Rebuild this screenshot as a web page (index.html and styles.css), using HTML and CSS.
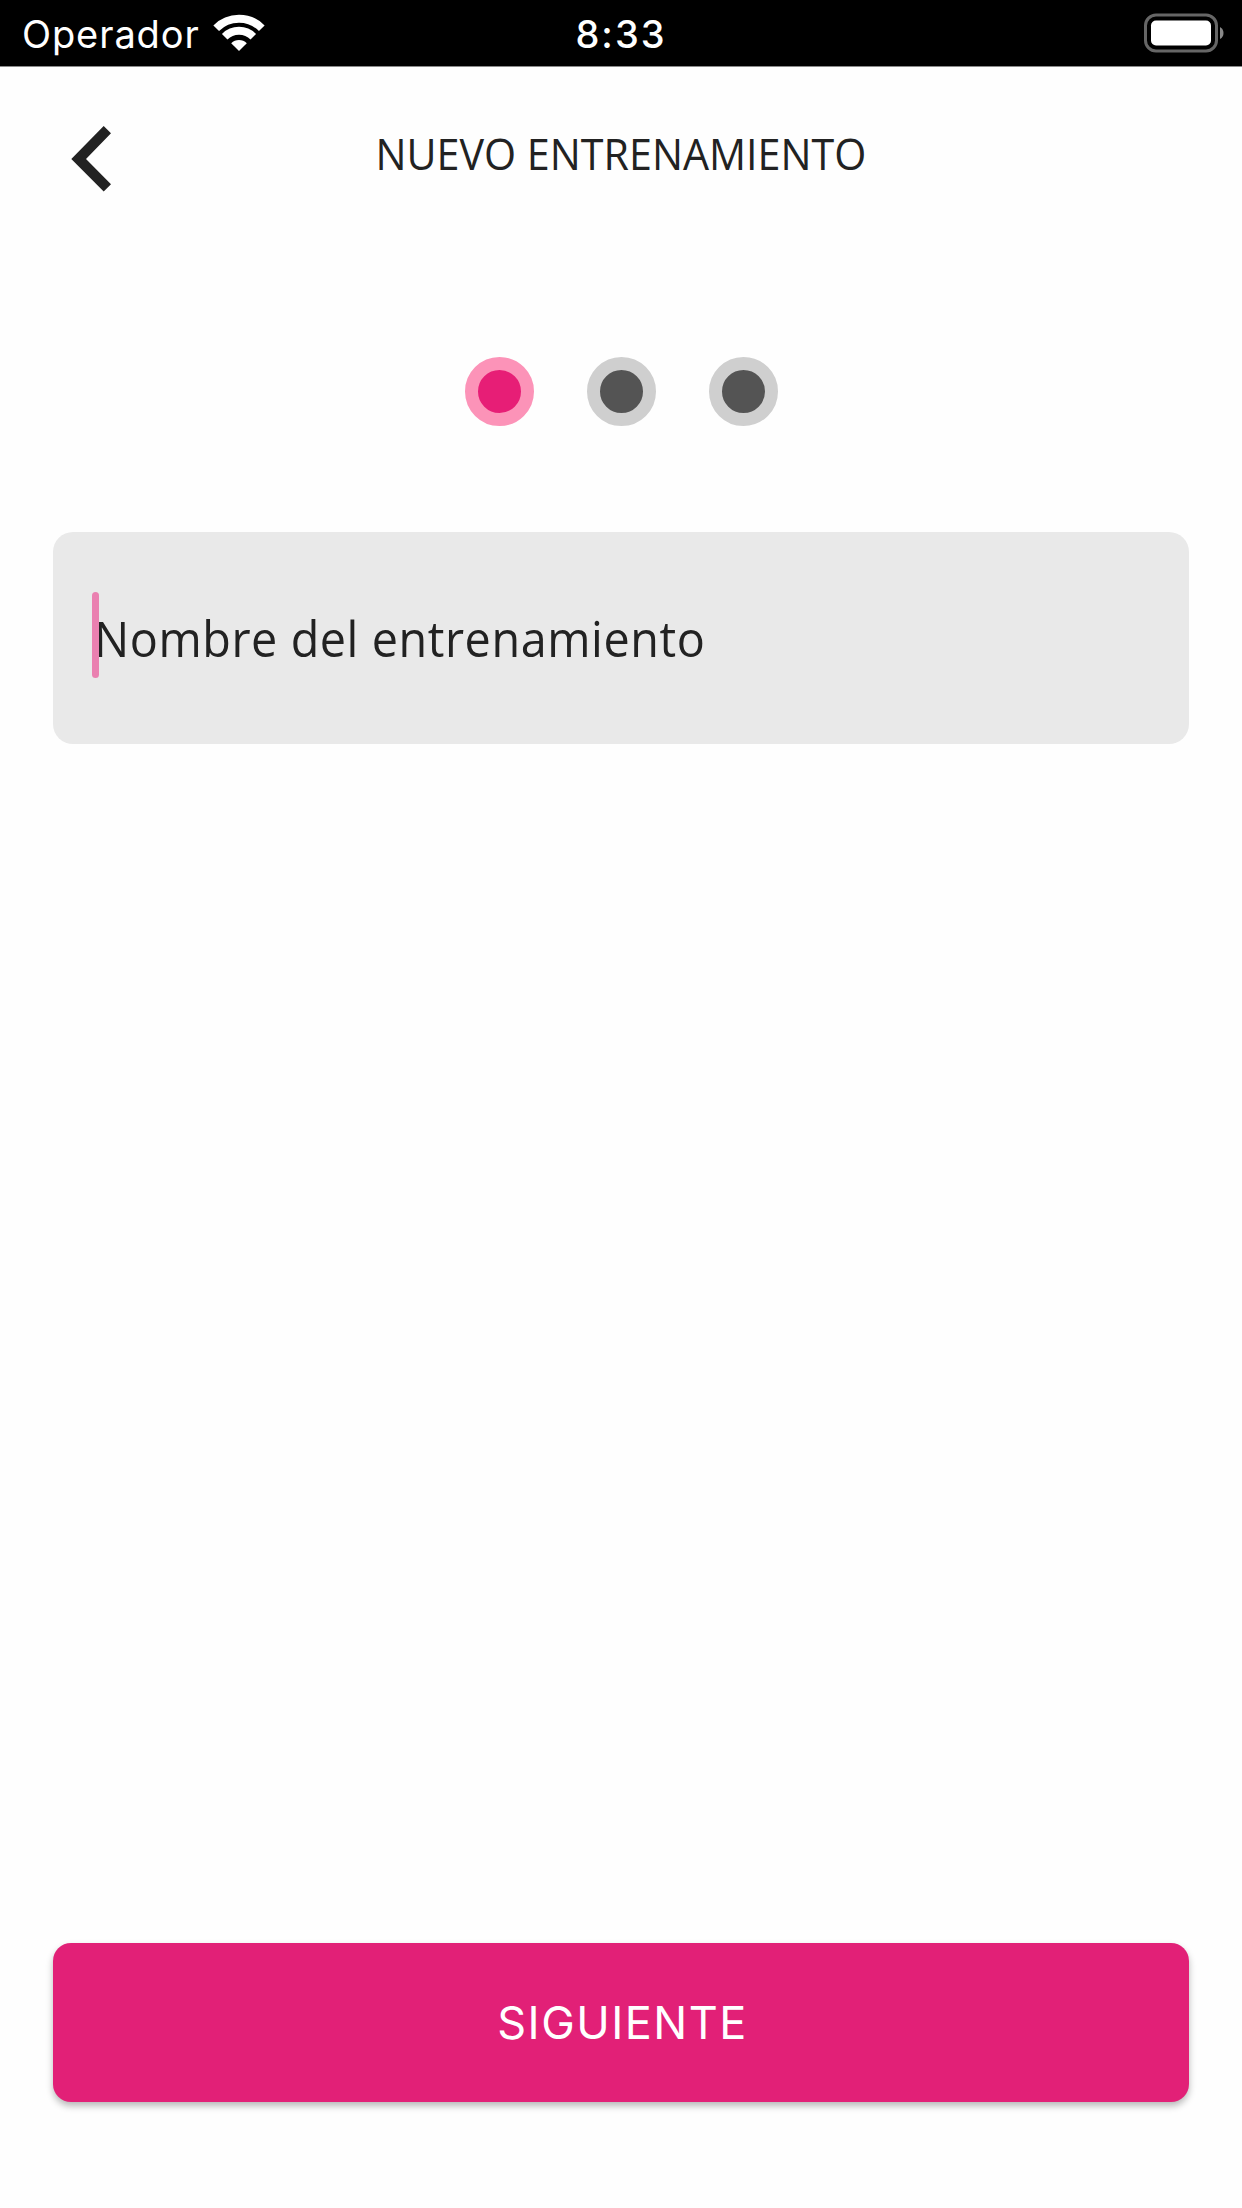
FILE: index.html
```html
<!DOCTYPE html>
<html lang="es">
<head>
    <meta charset="UTF-8">
    <meta name="viewport" content="width=device-width, initial-scale=1.0">
    <title>Nuevo entrenamiento</title>
    <link rel="stylesheet" href="styles.css">
</head>
<body>
    <div class="status-bar">
        <div class="carrier">
            <span class="carrier-name">Operador</span>
            <svg class="wifi" width="52" height="38" viewBox="0 0 52 38">
                <path d="M3.2 14.2A32.2 32.2 0 0 1 48.8 14.2" fill="none" stroke="#fff" stroke-width="8"/>
                <path d="M11.7 22.7A20.2 20.2 0 0 1 40.3 22.7" fill="none" stroke="#fff" stroke-width="7.8"/>
                <path d="M26 37L18.2 29.2A11.3 11.3 0 0 1 33.8 29.2Z" fill="#fff"/>
            </svg>
        </div>
        <span class="time">8:33</span>
        <svg class="battery" width="82" height="40" viewBox="0 0 82 40">
            <rect x="2.5" y="2" width="71" height="36" rx="10.5" fill="none" stroke="#666" stroke-width="3"/>
            <rect x="8" y="7.5" width="60" height="25" rx="5" fill="#fff"/>
            <path d="M77 14Q80.5 16 80.5 20T77 26Z" fill="#888"/>
        </svg>
    </div>
    <header class="header">
        <button type="button" class="back" aria-label="Volver">
            <svg width="40" height="66" viewBox="0 0 40 66">
                <path d="M32.7 0L40 7.3 15 33 40 58.2 32.7 65.5 0.3 33Z" fill="#222"/>
            </svg>
        </button>
        <h1 class="title">NUEVO ENTRENAMIENTO</h1>
    </header>
    <main class="content">
        <div class="steps">
            <span class="step active"></span>
            <span class="step"></span>
            <span class="step"></span>
        </div>
        <div class="field">
            <span class="cursor"></span>
            <span class="placeholder">Nombre del entrenamiento</span>
        </div>
        <button type="button" class="next">SIGUIENTE</button>
    </main>
</body>
</html>
```

FILE: styles.css
```css
body {
    margin: 0;
    height: 2208px;
    display: flex;
    flex-direction: column;
    background-color: #fefefe;
    color: #222;
    font-family: "Open Sans", sans-serif;
    overflow: hidden;
}

button {
    border: none;
    padding: 0;
    background: none;
    cursor: pointer;
}

.status-bar {
    display: grid;
    grid-template-columns: 1fr auto 1fr;
    align-items: center;
    height: 67px;
    padding: 0 17px 0 22px;
    background-color: #000;
    border-bottom: 1px solid #8a8a8a;
    box-sizing: border-box;
    color: #fff;
    font-family: Inter, sans-serif;
    font-size: 38px;
    line-height: 46px;
}

.carrier {
    display: flex;
    align-items: center;
    gap: 13px;
    letter-spacing: 0.9px;
}

.carrier-name {
    padding-top: 2px;
}

.time {
    padding: 2px 5px 0 0;
    font-weight: 500;
    letter-spacing: 2px;
}

.battery {
    justify-self: end;
}

.header {
    display: grid;
    grid-template-columns: 1fr auto 1fr;
    height: 180px;
    padding: 0 71px;
}

.back {
    width: 40px;
    height: 66px;
    margin-top: 59px;
}

.back svg {
    display: block;
}

.title {
    margin: 59px 0 0;
    font-size: 44px;
    font-weight: 400;
    line-height: 54px;
    transform: scaleX(0.937);
}

.content {
    flex: 1;
    display: flex;
    flex-direction: column;
    padding: 110px 53px 106px;
}

.steps {
    display: flex;
    justify-content: center;
    gap: 53px;
}

.step {
    width: 43px;
    height: 43px;
    border: 13px solid #cfcfcf;
    border-radius: 50%;
    background-color: #545454;
}

.step.active {
    border-color: #fc93b8;
    background-color: #e71e76;
}

.field {
    position: relative;
    display: flex;
    align-items: center;
    height: 212px;
    margin-top: 106px;
    padding-left: 41px;
    box-sizing: border-box;
    border-radius: 20px;
    background-color: #e9e9e9;
}

.cursor {
    position: absolute;
    left: 39px;
    top: 60px;
    width: 7px;
    height: 86px;
    border-radius: 4px;
    background-color: #ea80b0;
    z-index: 1;
}

.placeholder {
    font-size: 50px;
    letter-spacing: 0.6px;
    transform: scaleX(0.935);
    transform-origin: left;
}

.next {
    height: 159px;
    margin-top: auto;
    border-radius: 18px;
    background-color: #e22077;
    box-shadow: 0 4px 7px rgba(0, 0, 0, 0.28);
    color: #fff;
    font-family: Inter, sans-serif;
    font-size: 45px;
    letter-spacing: 1.5px;
    text-indent: 3px;
}
```
